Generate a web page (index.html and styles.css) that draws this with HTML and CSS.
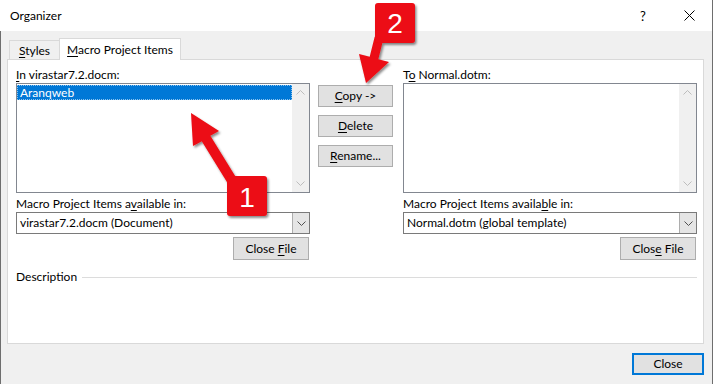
FILE: index.html
```html
<!DOCTYPE html>
<html>
<head>
	<meta charset="utf-8">
	<title>Organizer</title>
	<link rel="stylesheet" href="styles.css">
</head>
<body>
<div class="window">

	<div class="titlebar">
		<span class="title">Organizer</span>
		<span class="caption-btn help">?</span>
		<span class="caption-btn">
			<svg width="11" height="11" viewBox="0 0 11 11"><path d="M0.5 0.5L10.5 10.5M10.5 0.5L0.5 10.5" stroke="#000" stroke-width="1" fill="none"/></svg>
		</span>
	</div>

	<div class="client">
		<div class="tabs">
			<div class="tab"><span><u>S</u>tyles</span></div>
			<div class="tab active"><span><u>M</u>acro Project Items</span></div>
		</div>

		<div class="panel">
			<div class="columns">

				<!-- Source document -->
				<div class="side">
					<div class="label"><u>I</u>n virastar7.2.docm:</div>
					<div class="listbox">
						<div class="items">
							<div class="item selected">Aranqweb</div>
						</div>
						<div class="scrollbar">
							<span class="sb-btn"><svg width="9" height="5" viewBox="0 0 9 5"><path d="M0.5 4.5L4.5 0.5L8.5 4.5" class="chev"/></svg></span>
							<span class="sb-btn"><svg width="9" height="5" viewBox="0 0 9 5"><path d="M0.5 0.5L4.5 4.5L8.5 0.5" class="chev"/></svg></span>
						</div>
					</div>
					<div class="label lower">Macro Project Items a<u>v</u>ailable in:</div>
					<div class="combo">
						<span class="combo-text">virastar7.2.docm (Document)</span>
						<span class="combo-btn"><svg width="9" height="5" viewBox="0 0 9 5"><path d="M0.5 0.5L4.5 4.5L8.5 0.5" class="chev dark"/></svg></span>
					</div>
					<div class="actions"><button class="btn file-btn"><span>Close <u>F</u>ile</span></button></div>
				</div>

				<!-- Commands -->
				<div class="middle">
					<button class="btn cmd"><span><u>C</u>opy -&gt;</span></button>
					<button class="btn cmd"><span><u>D</u>elete</span></button>
					<button class="btn cmd"><span><u>R</u>ename...</span></button>
				</div>

				<!-- Target document -->
				<div class="side">
					<div class="label">T<u>o</u> Normal.dotm:</div>
					<div class="listbox">
						<div class="items"></div>
						<div class="scrollbar">
							<span class="sb-btn"><svg width="9" height="5" viewBox="0 0 9 5"><path d="M0.5 4.5L4.5 0.5L8.5 4.5" class="chev"/></svg></span>
							<span class="sb-btn"><svg width="9" height="5" viewBox="0 0 9 5"><path d="M0.5 0.5L4.5 4.5L8.5 0.5" class="chev"/></svg></span>
						</div>
					</div>
					<div class="label lower">Macro Project Items availa<u>b</u>le in:</div>
					<div class="combo">
						<span class="combo-text">Normal.dotm (global template)</span>
						<span class="combo-btn"><svg width="9" height="5" viewBox="0 0 9 5"><path d="M0.5 0.5L4.5 4.5L8.5 0.5" class="chev dark"/></svg></span>
					</div>
					<div class="actions"><button class="btn file-btn"><span>Clos<u>e</u> File</span></button></div>
				</div>

			</div>

			<div class="description">
				<span>Description</span>
				<span class="rule"></span>
			</div>
		</div>

		<div class="footer">
			<button class="btn default"><span>Close</span></button>
		</div>
	</div>

	<!-- Callouts drawn over the dialog -->
	<svg class="callouts" width="713" height="384" viewBox="0 0 713 384">
		<defs>
			<filter id="shadow" x="-20%" y="-20%" width="150%" height="150%">
				<feDropShadow dx="1.5" dy="2" stdDeviation="1.3" flood-color="#000" flood-opacity="0.45"/>
			</filter>
		</defs>
		<g filter="url(#shadow)" fill="#ec0a12">
			<polygon points="191,113 219,131 210.3,135.8 239.3,182.8 230.8,188.2 201.8,141.2 193,146"/>
			<rect x="227" y="176" width="40" height="40" rx="3"/>
			<polygon points="366,83 359,54 369.7,56.8 374.7,36.8 383.3,39.2 378.3,59.2 389,62"/>
			<rect x="375" y="3" width="40" height="40" rx="3"/>
		</g>
		<text x="247" y="207" class="num">1</text>
		<text x="395" y="33" class="num">2</text>
	</svg>

</div>
</body>
</html>
```

FILE: styles.css
```css
/* Reset */

* { margin: 0; padding: 0; box-sizing: border-box; }

html, body {
	width: 713px;
	height: 384px;
	overflow: hidden;
}

body {
	font-family: Lato, "Noto Sans", sans-serif;
	font-size: 12px;
	line-height: 16px;
	color: #000;
	background-color: #f0f0f0;
}

u {
	text-decoration: underline;
	text-underline-offset: 2px;
}


/* Window frame */

.window {
	position: relative;
	width: 713px;
	height: 384px;
	display: flex;
	flex-direction: column;
	border-right: solid 1px #6e6e6e;
}

.titlebar {
	height: 31px;
	background-color: white;
	display: flex;
	align-items: center;
	padding-left: 10px;
}

.title {
	flex: 1;
}

.caption-btn {
	width: 46px;
	height: 31px;
	display: flex;
	align-items: center;
	justify-content: center;
}

.caption-btn.help {
	font-size: 13px;
	padding-top: 1px;
}

.client {
	flex: 1;
	border-left: solid 1px #6e6e6e;
	padding: 7px 8px 0 6px;
}


/* Tabs */

.tabs {
	display: flex;
	align-items: flex-end;
	height: 22px;
	padding-left: 2px;
	margin-bottom: -1px;
	position: relative;
	z-index: 1;
}

.tab {
	height: 19px;
	margin-bottom: 1px;
	width: 51px;
	border: solid 1px #d9d9d9;
	border-bottom: none;
	background-color: #f0f0f0;
	display: flex;
	align-items: center;
	justify-content: center;
	padding-top: 2px;
}

.tab.active {
	height: 22px;
	margin-bottom: 0;
	margin-left: -1px;
	width: 122px;
	background-color: white;
	padding-top: 1px;
}


/* Panel */

.panel {
	height: 285px;
	border: solid 1px #d9d9d9;
	background-color: white;
	padding: 7px 6px 0 8px;
}

.columns {
	display: flex;
}

.side {
	width: 294px;
	display: flex;
	flex-direction: column;
}

.label {
	height: 16px;
	white-space: nowrap;
}

.label.lower {
	margin-top: 3px;
}

.listbox {
	height: 110px;
	border: solid 1px #828790;
	display: flex;
}

.items {
	flex: 1;
	padding: 1px 0 0 0;
}

.item {
	height: 15px;
	line-height: 15px;
	padding-left: 3px;
}

.item.selected {
	background-color: #0078d7;
	color: white;
	outline: dotted 1px rgba(255, 255, 255, 0.55);
	outline-offset: -1px;
}

.scrollbar {
	width: 17px;
	background-color: #f0f0f0;
	display: flex;
	flex-direction: column;
	justify-content: space-between;
}

.sb-btn {
	height: 17px;
	display: flex;
	align-items: center;
	justify-content: center;
}

.chev {
	fill: none;
	stroke: #bdbdbd;
	stroke-width: 1;
}

.chev.dark {
	stroke: #505050;
}


/* Combo */

.combo {
	height: 22px;
	border: solid 1px #7a7a7a;
	display: flex;
	background-color: white;
}

.combo-text {
	flex: 1;
	padding-left: 3px;
	line-height: 20px;
}

.combo-btn {
	width: 17px;
	background-color: #e5e5e5;
	border-left: solid 1px #adadad;
	display: flex;
	align-items: center;
	justify-content: center;
}


/* Buttons */

.btn {
	font: inherit;
	color: #000;
	background-color: #e1e1e1;
	border: solid 1px #adadad;
	height: 22px;
	display: flex;
	align-items: center;
	justify-content: center;
	white-space: pre;
}

.actions {
	display: flex;
	justify-content: flex-end;
	margin-top: 3px;
}

.file-btn {
	width: 76px;
	height: 23px;
	margin-right: 1px;
}

.middle {
	width: 75px;
	margin: 0 10px 0 8px;
	padding-top: 18px;
	display: flex;
	flex-direction: column;
	gap: 8px;
}

.btn.default {
	width: 72px;
	border: solid 2px #0078d7;
}


/* Description */

.description {
	margin-top: 9px;
	display: flex;
	align-items: center;
	gap: 5px;
}

.description .rule {
	flex: 1;
	border-top: solid 1px #dcdcdc;
	margin-top: 1px;
}


/* Footer */

.footer {
	display: flex;
	justify-content: flex-end;
	padding-top: 9px;
}


/* Callouts */

.callouts {
	position: absolute;
	left: 0;
	top: 0;
	pointer-events: none;
}

.callouts .num {
	font-family: "Liberation Sans", Arial, sans-serif;
	font-size: 28px;
	fill: white;
	text-anchor: middle;
}
```
